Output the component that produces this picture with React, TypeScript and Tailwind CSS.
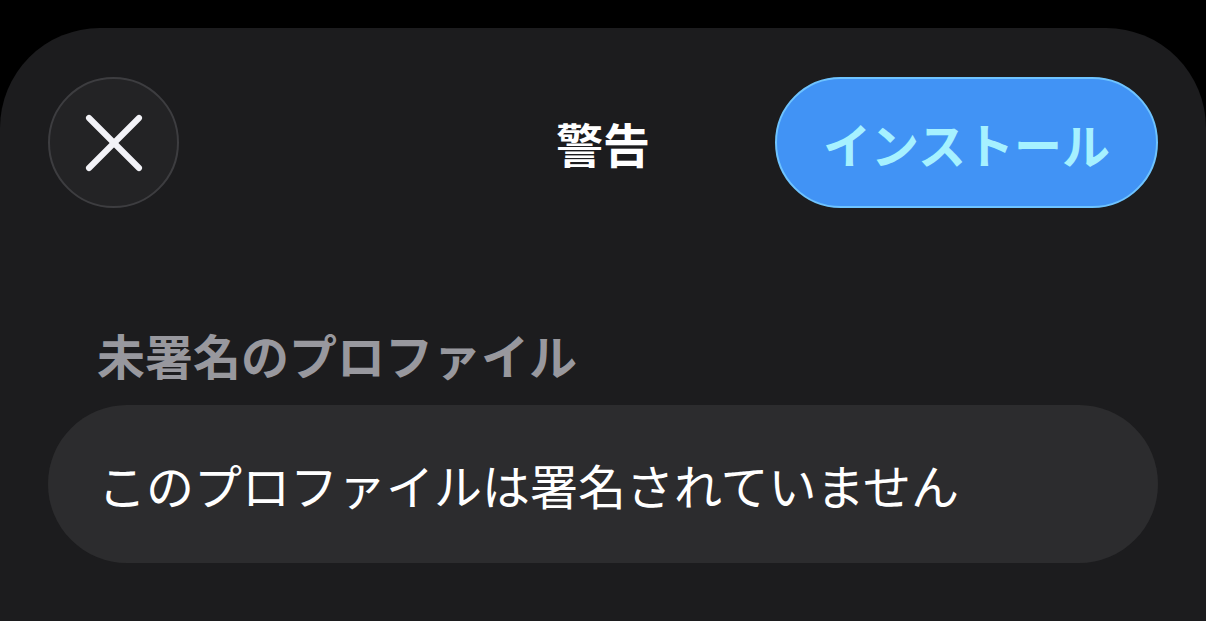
import { X } from "lucide-react";

const font = { fontFamily: '"Noto Sans CJK JP", "Noto Sans", sans-serif' };

const App = () => {
  return (
    <div className="h-[621px] w-[1206px] overflow-hidden bg-black pt-[28px]" style={font}>
      <div className="h-[593px] w-full rounded-t-[100px] bg-[#1c1c1e] px-[48px] pt-[49px]">
        <div className="grid grid-cols-[1fr_auto_1fr] items-center">
          <button className="flex h-[131px] w-[131px] items-center justify-center justify-self-start rounded-full border-2 border-[#3d3d40] bg-[#232325]">
            <X className="h-[100px] w-[100px] text-[#f2f2f7]" strokeWidth={1.45} />
          </button>
          <h1 className="text-[47px] font-bold leading-none text-white">警告</h1>
          <button className="flex h-[131px] w-[383px] items-center justify-center justify-self-end rounded-full border-2 border-[#6ec3ff] bg-[#4193f5] text-[48px] font-bold text-[#a6f1ff]">
            インストール
          </button>
        </div>
        <div className="mt-[122px] px-[49px] text-[48px] font-bold leading-none text-[#98989e]">
          未署名のプロファイル
        </div>
        <div className="mt-[27px] flex h-[158px] items-center rounded-full bg-[#2c2c2e] px-[50px] text-[48px] leading-none text-white">
          このプロファイルは署名されていません
        </div>
      </div>
    </div>
  );
};

export default App;
